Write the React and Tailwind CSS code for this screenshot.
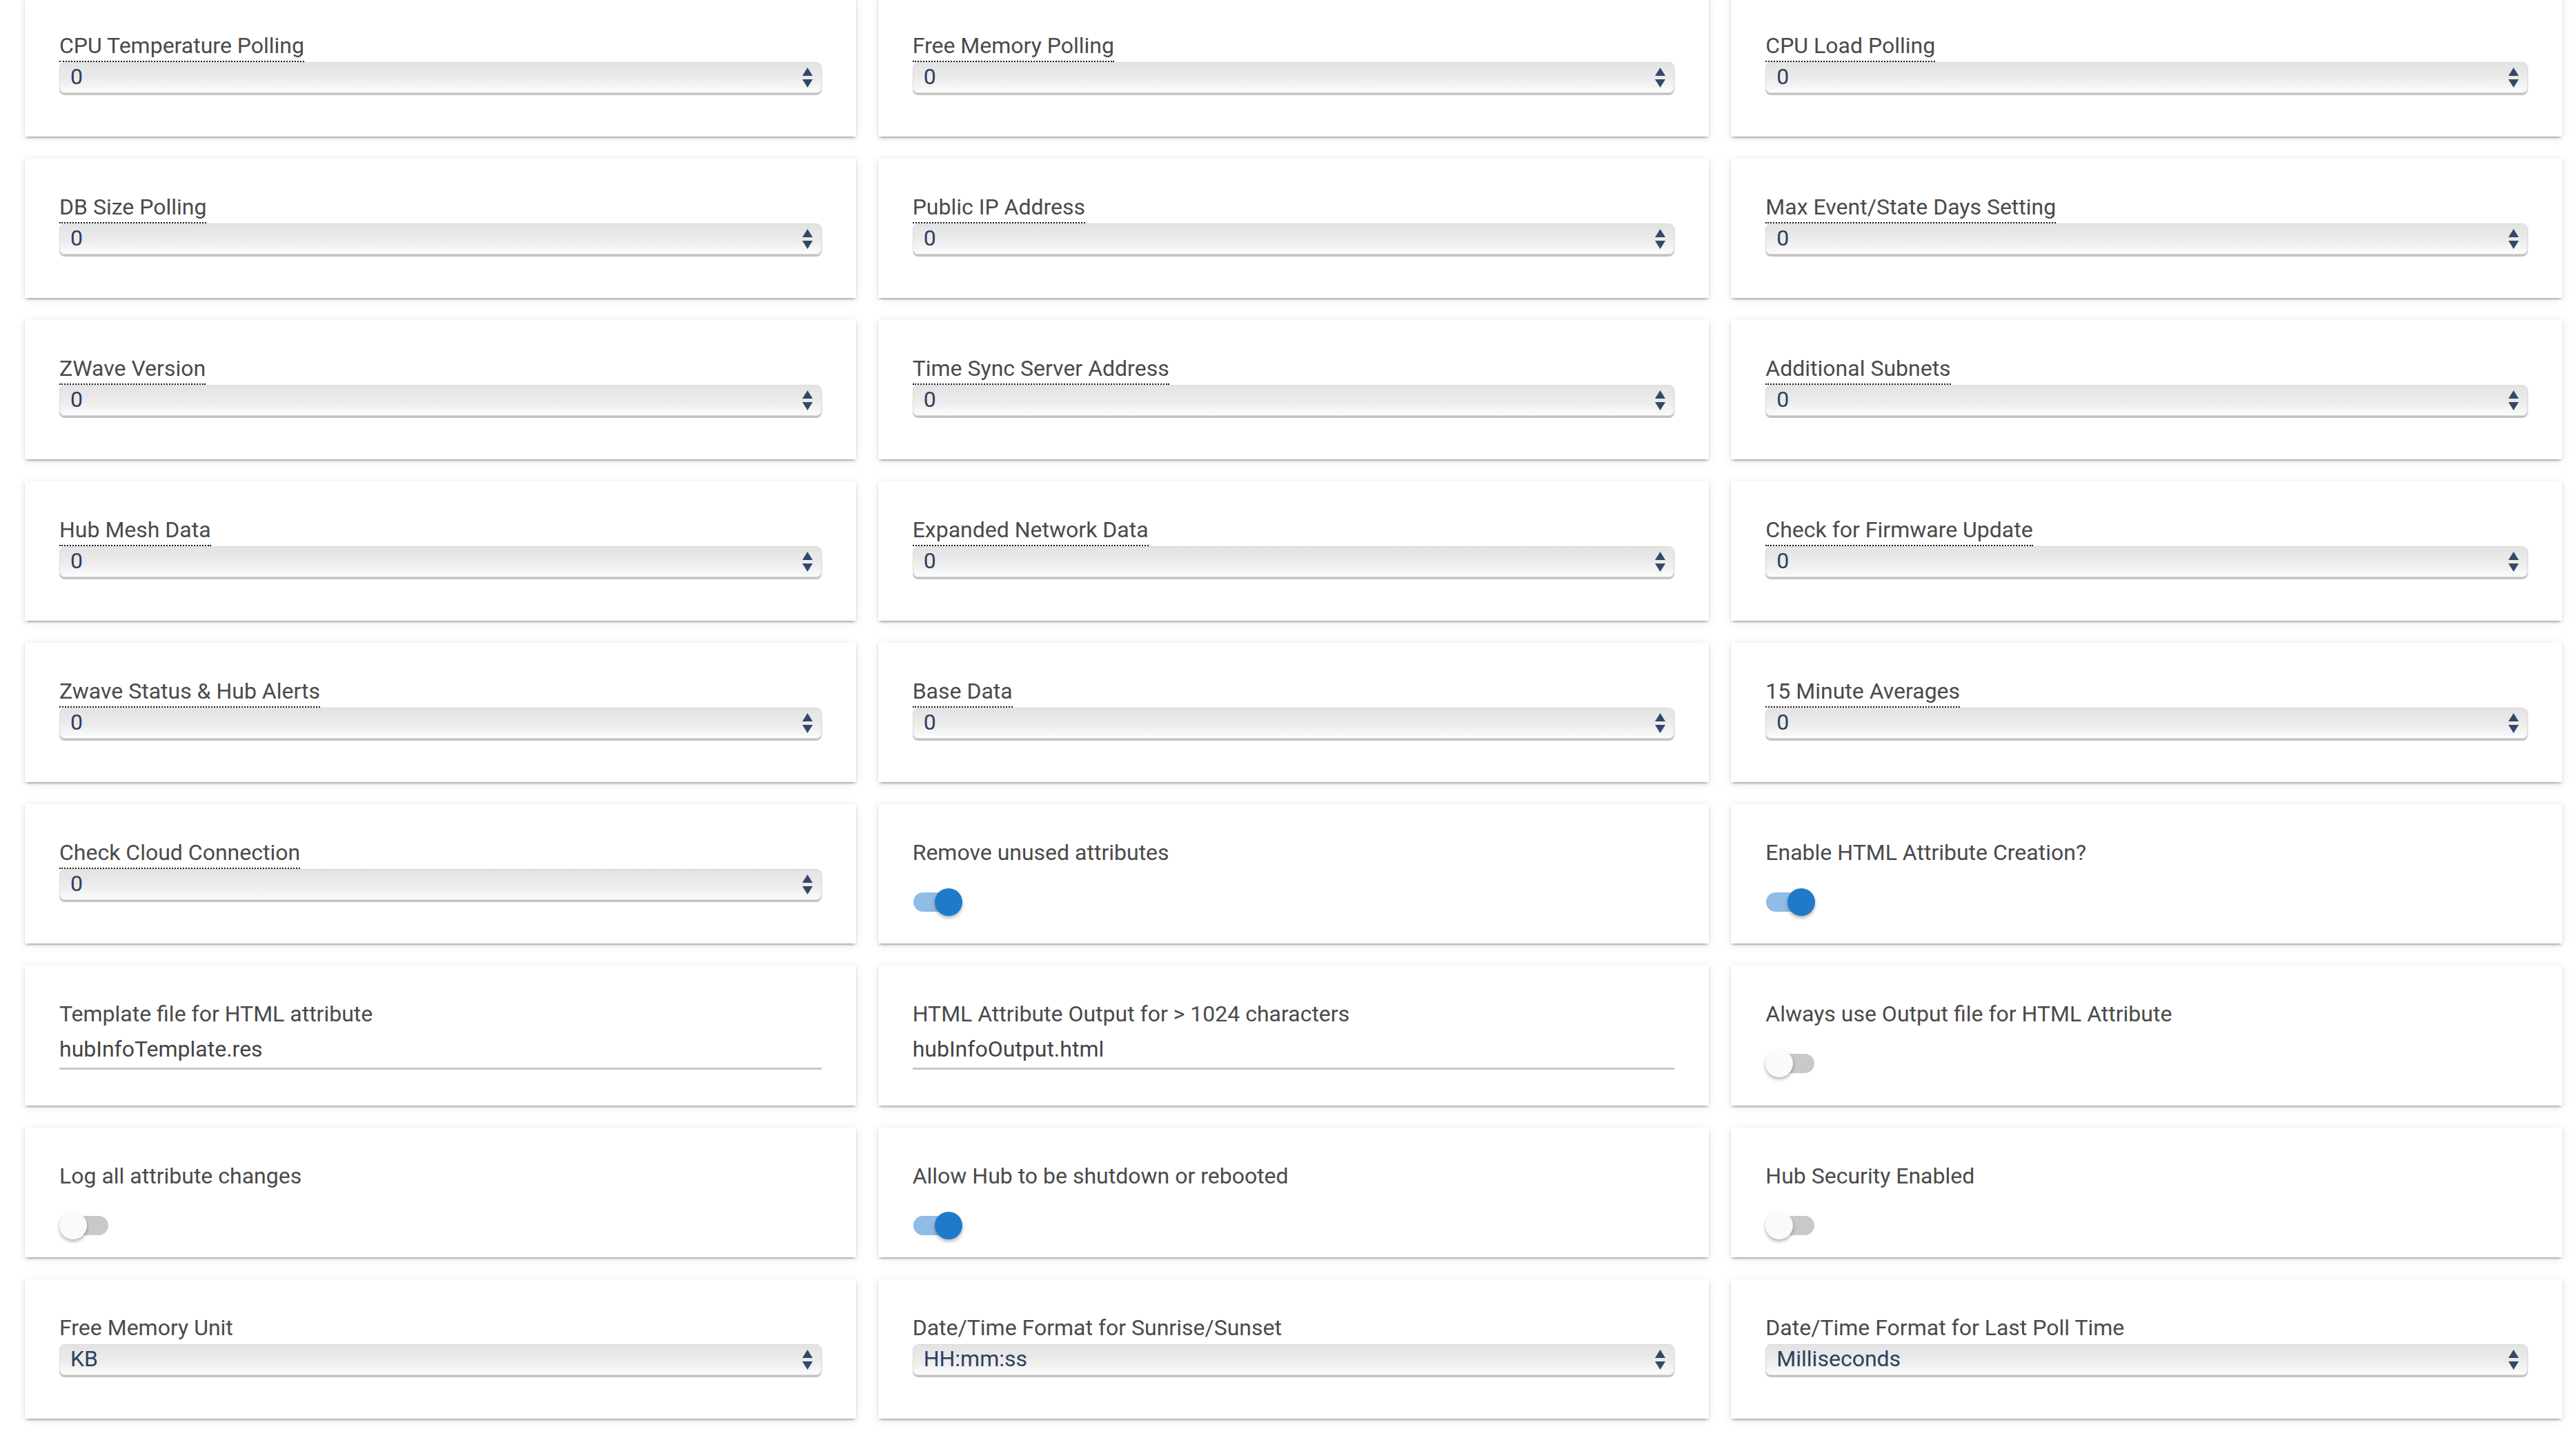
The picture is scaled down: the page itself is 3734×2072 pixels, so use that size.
import React from 'react';

const SETTINGS = [
    { label: 'CPU Temperature Polling', type: 'select', value: '0', hint: true },
    { label: 'Free Memory Polling', type: 'select', value: '0', hint: true },
    { label: 'CPU Load Polling', type: 'select', value: '0', hint: true },
    { label: 'DB Size Polling', type: 'select', value: '0', hint: true },
    { label: 'Public IP Address', type: 'select', value: '0', hint: true },
    { label: 'Max Event/State Days Setting', type: 'select', value: '0', hint: true },
    { label: 'ZWave Version', type: 'select', value: '0', hint: true },
    { label: 'Time Sync Server Address', type: 'select', value: '0', hint: true },
    { label: 'Additional Subnets', type: 'select', value: '0', hint: true },
    { label: 'Hub Mesh Data', type: 'select', value: '0', hint: true },
    { label: 'Expanded Network Data', type: 'select', value: '0', hint: true },
    { label: 'Check for Firmware Update', type: 'select', value: '0', hint: true },
    { label: 'Zwave Status & Hub Alerts', type: 'select', value: '0', hint: true },
    { label: 'Base Data', type: 'select', value: '0', hint: true },
    { label: '15 Minute Averages', type: 'select', value: '0', hint: true },
    { label: 'Check Cloud Connection', type: 'select', value: '0', hint: true },
    { label: 'Remove unused attributes', type: 'toggle', value: true },
    { label: 'Enable HTML Attribute Creation?', type: 'toggle', value: true },
    { label: 'Template file for HTML attribute', type: 'text', value: 'hubInfoTemplate.res' },
    { label: 'HTML Attribute Output for > 1024 characters', type: 'text', value: 'hubInfoOutput.html' },
    { label: 'Always use Output file for HTML Attribute', type: 'toggle', value: false },
    { label: 'Log all attribute changes', type: 'toggle', value: false },
    { label: 'Allow Hub to be shutdown or rebooted', type: 'toggle', value: true },
    { label: 'Hub Security Enabled', type: 'toggle', value: false },
    { label: 'Free Memory Unit', type: 'select', value: 'KB' },
    { label: 'Date/Time Format for Sunrise/Sunset', type: 'select', value: 'HH:mm:ss' },
    { label: 'Date/Time Format for Last Poll Time', type: 'select', value: 'Milliseconds' },
];

const SelectBox = ({ value }) => (
    <div className="flex h-[45px] items-center justify-between rounded-[8px] border border-[#d9d9d9] bg-linear-to-b from-[#e3e3e3] via-[#ebebeb] to-[#fbfbfb] pb-[3px] pl-[15px] pr-[12px] shadow-[0_3px_0_0_#c3c3c3,1px_1px_2px_0_rgba(0,0,0,0.08)]">
        <span className="text-[32px] leading-none text-[#2d3f60]">{value}</span>
        <svg width="15" height="29" viewBox="0 0 15 29" className="mt-[3px]">
            <polygon points="7.5,0 15,12 0,12" fill="#34476b" />
            <polygon points="0,17 15,17 7.5,29" fill="#34476b" />
        </svg>
    </div>
);

const Toggle = ({ on }) => (
    <div className="mt-[22px] flex h-[52px] items-center">
        <div className="relative h-[40px] w-[72px]">
            <div className={`absolute left-[1px] top-[6px] h-[28px] w-[70px] rounded-full ${on ? 'bg-[#90bce6]' : 'bg-[#c9c9c9]'}`} />
            <div
                className={`absolute top-0 h-[40px] w-[40px] rounded-full shadow-[0_3px_5px_0_rgba(0,0,0,0.3)] ${on ? 'left-[32px] bg-[#1f7bc9]' : 'left-0 bg-[#fafafa]'}`}
            />
        </div>
    </div>
);

const TextField = ({ value }) => (
    <div className="mt-[8px] border-b-[3px] border-[#c8c8c8] pb-[8px] text-[32px] leading-[38px] text-[#444444]">
        {value}
    </div>
);

const SettingCard = ({ item }) => (
    <div className="bg-white px-[50px] pt-[51px] pb-[20px] shadow-[0_2px_3px_0_rgba(0,0,0,0.14),0_6px_2px_-4px_rgba(0,0,0,0.16),0_2px_12px_0_rgba(0,0,0,0.1)]">
        <div className="h-[43px]">
            <span
                className={`inline-block pb-[3px] text-[32px] leading-[38px] text-[#4a4a4a] ${item.hint ? 'border-b-2 border-dotted border-[#1a1a1a]' : ''}`}
            >
                {item.label}
            </span>
        </div>
        {item.type === 'select' && (
            <div className="pb-[43px]">
                <SelectBox value={item.value} />
            </div>
        )}
        {item.type === 'toggle' && <Toggle on={item.value} />}
        {item.type === 'text' && (
            <div className="pb-[32px]">
                <TextField value={item.value} />
            </div>
        )}
    </div>
);

export default function App() {
    return (
        <div className="min-h-screen bg-white font-['Roboto',sans-serif]">
            <div className="-mt-[4px] grid grid-cols-3 gap-[32px] pl-[36px] pr-[20px] pb-[40px]">
                {SETTINGS.map((item) => (
                    <SettingCard key={item.label} item={item} />
                ))}
            </div>
        </div>
    );
}
